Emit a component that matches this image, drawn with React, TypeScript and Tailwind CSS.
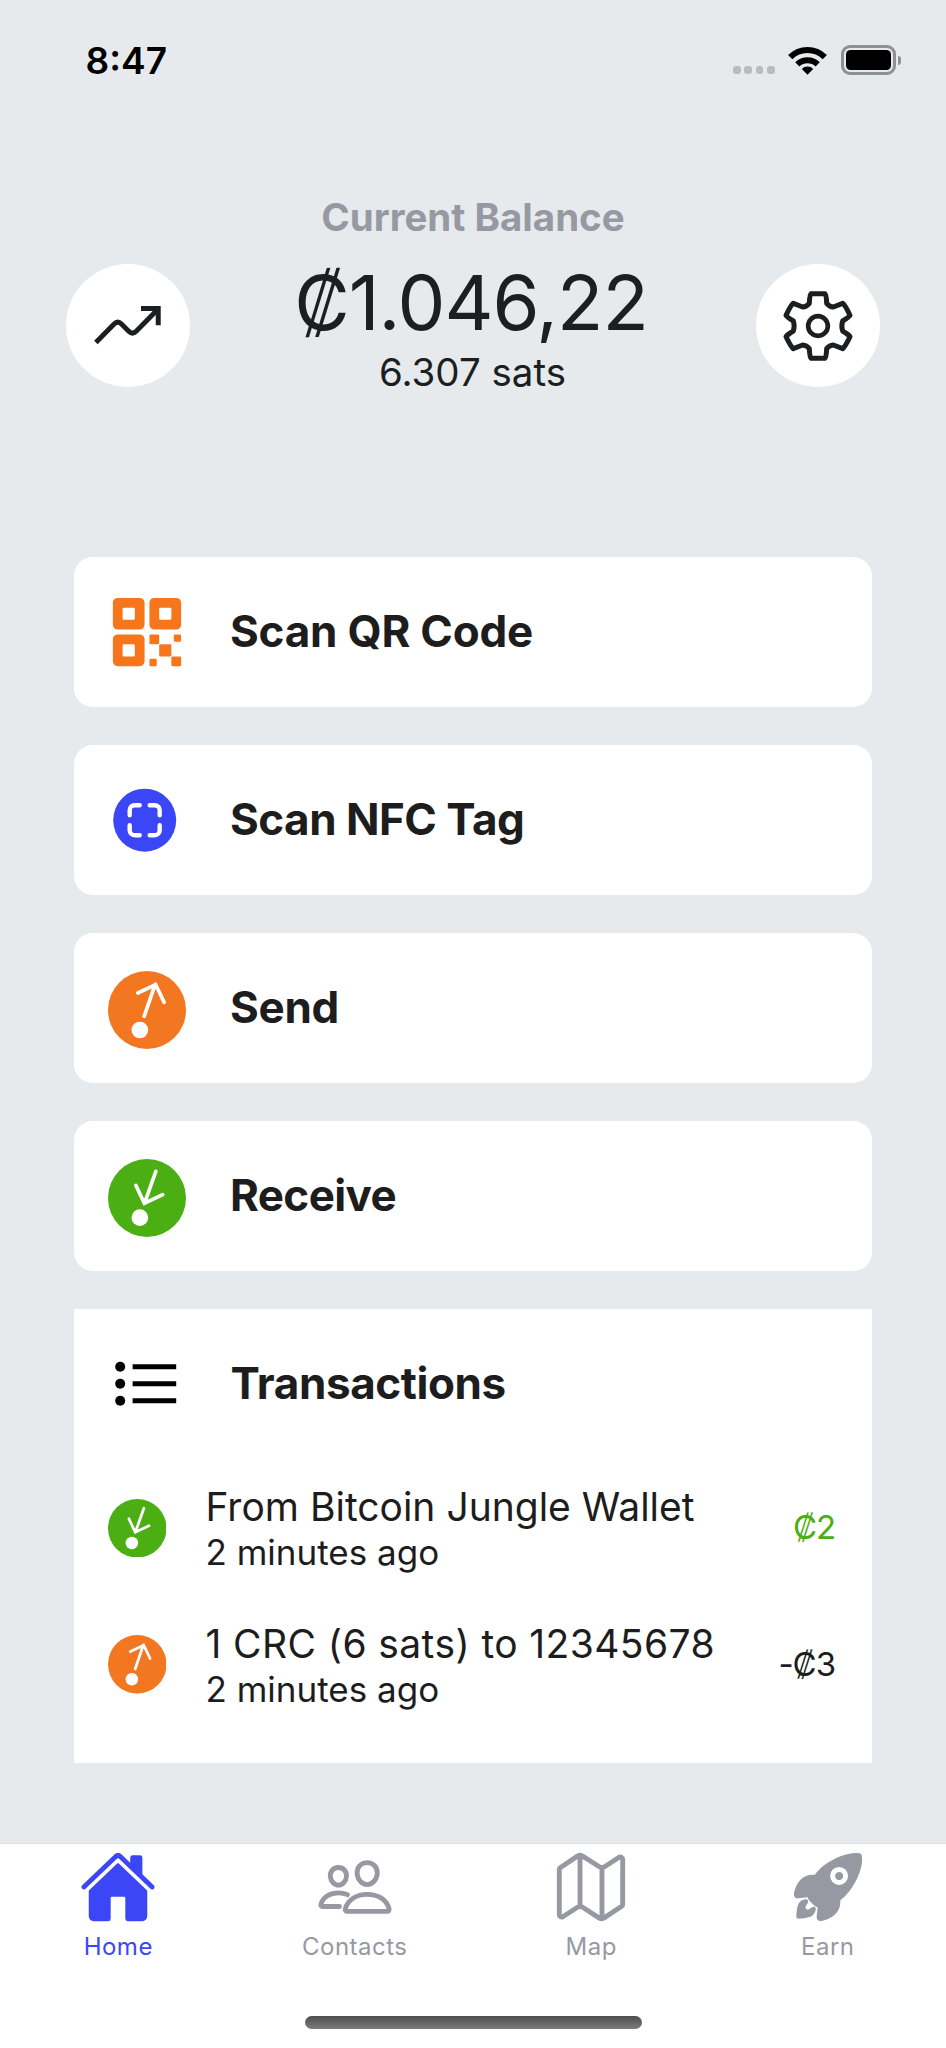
import React from 'react';
import clsx from 'clsx';
import { IoHome, IoMapOutline, IoPeopleOutline, IoQrCode, IoRocket } from 'react-icons/io5';

type IconProps = {
  className?: string;
};

const TrendIcon = ({ className }: IconProps) => (
  <svg viewBox="0 0 125 123" fill="none" stroke="currentColor" strokeWidth="5" className={className}>
    <path d="M30 78.5 48.3 60Q52 56.3 55.7 60L63 67.3Q66.7 71 70.5 67.3L92.3 45.3" />
    <path d="M75.3 44.4H92.6V61.2" />
  </svg>
);

const GearIcon = ({ className }: IconProps) => (
  <svg
    viewBox="-105 -105 210 210"
    fill="none"
    stroke="currentColor"
    strokeWidth="15"
    strokeLinejoin="round"
    className={className}
  >
    <path d="M-21 -97H21Q25 -95 26 -68Q34 -58 46 -57L74 -68Q80 -65 96 -32Q92 -26 74 -15Q69 0 74 15Q92 26 96 32Q80 65 74 68L46 57Q34 58 26 68Q25 95 21 97H-21Q-25 95 -26 68Q-34 58 -46 57L-74 68Q-80 65 -96 32Q-92 26 -74 15Q-69 0 -74 -15Q-92 -26 -96 -32Q-80 -65 -74 -68L-46 -57Q-34 -58 -26 -68Q-25 -95 -21 -97Z" />
    <circle r="29.5" strokeWidth="14" />
  </svg>
);

const NfcIcon = ({ className }: IconProps) => (
  <svg viewBox="0 0 78 78" fill="none" className={className}>
    <circle cx="36.7" cy="39.2" r="31.5" fill="#3b47f6" />
    <path
      d="M21.7 34.2v-5a5 5 0 0 1 5-5h5M41.7 24.2h5a5 5 0 0 1 5 5v5M51.7 44.2v5a5 5 0 0 1-5 5h-5M31.7 54.2h-5a5 5 0 0 1-5-5v-5"
      stroke="#fff"
      strokeWidth="4.4"
      strokeLinecap="round"
    />
  </svg>
);

const SendIcon = ({ className }: IconProps) => (
  <svg viewBox="-117 -117 234 234" fill="none" className={className}>
    <circle r="117" fill="#f37620" />
    <path d="M-8.5 19 24.5-77M-27.5-51 26-76 51.5-23" stroke="#fff" strokeWidth="11" strokeLinecap="round" />
    <circle cx="-21.5" cy="60" r="25" fill="#fff" />
  </svg>
);

const ReceiveIcon = ({ className }: IconProps) => (
  <svg viewBox="-117 -117 234 234" fill="none" className={className}>
    <circle r="117" fill="#4bae12" />
    <path d="M26.5-80-7.5 16M-33.5-38-8 16 47-10" stroke="#fff" strokeWidth="11" strokeLinecap="round" />
    <circle cx="-21.5" cy="59" r="25" fill="#fff" />
  </svg>
);

const ListIcon = ({ className }: IconProps) => (
  <svg viewBox="0 0 78 78" className={className}>
    <circle cx="12.2" cy="21.7" r="5" />
    <circle cx="12.2" cy="38.7" r="5" />
    <circle cx="12.2" cy="55.7" r="5" />
    <path d="M24.6 19.2h43.6v5H24.6zM24.6 36.2h43.6v5H24.6zM24.6 53.2h43.6v5H24.6z" />
  </svg>
);

const WifiIcon = ({ className }: IconProps) => (
  <svg viewBox="0 0 39 29" fill="none" stroke="currentColor" strokeWidth="6" className={className}>
    <path d="M2.2 11.2a24.6 24.6 0 0 1 34.6 0" />
    <path d="M9.3 18.4a14.6 14.6 0 0 1 20.4 0" />
    <path d="M19.5 28.8 13.8 23a7.8 7.8 0 0 1 11.4 0Z" fill="currentColor" stroke="none" />
  </svg>
);

const actions = [
  { label: 'Scan QR Code', icon: IoQrCode, iconClass: 'text-[#f7761c]', textClass: 'tracking-[-0.2px]' },
  { label: 'Scan NFC Tag', icon: NfcIcon, iconClass: '', textClass: 'tracking-[-0.5px]' },
  { label: 'Send', icon: SendIcon, iconClass: 'translate-y-[2px]', textClass: 'tracking-[-0.3px]' },
  { label: 'Receive', icon: ReceiveIcon, iconClass: 'translate-y-[2px]', textClass: 'tracking-[-0.6px]' },
];

const transactions = [
  { title: 'From Bitcoin Jungle Wallet', time: '2 minutes ago', amount: '₡2', incoming: true },
  { title: '1 CRC (6 sats) to 12345678', time: '2 minutes ago', amount: '-₡3', incoming: false },
];

const tabs = [
  { label: 'Home', icon: IoHome, active: true },
  { label: 'Contacts', icon: IoPeopleOutline, active: false },
  { label: 'Map', icon: IoMapOutline, active: false },
  { label: 'Earn', icon: IoRocket, active: false },
];

const StatusBar = () => (
  <div className="flex h-[120px] items-center justify-between pr-[45px] pl-[85.5px] text-black">
    <span className="mt-px text-[37px] leading-[44px] font-semibold">8:47</span>
    <div className="flex items-center">
      <div className="mt-5 mr-[13.5px] flex gap-[3.8px]">
        {[0, 1, 2, 3].map((dot) => (
          <span key={dot} className="h-[7.5px] w-[7.5px] rounded-[3px] bg-[#b9bcbf]" />
        ))}
      </div>
      <WifiIcon className="mr-[14px] h-[29px] w-[39px]" />
      <div className="h-[29.5px] w-[54.5px] rounded-[9px] border-[3px] border-[#8e9193] p-[2px]">
        <div className="h-full rounded-[4.5px] bg-black" />
      </div>
      <div className="ml-[2px] h-[9px] w-[3.5px] rounded-r-full bg-[#8e9193]" />
    </div>
  </div>
);

const Header = () => (
  <header className="flex h-[437px] items-start justify-between px-[65.5px] pt-[74px] text-[#1c1f21]">
    <button className="mt-[70px] flex h-[123px] w-[124.5px] items-center justify-center rounded-[50%] bg-white">
      <TrendIcon className="h-[123px] w-[124.5px]" />
    </button>
    <div className="flex flex-col items-center whitespace-nowrap">
      <p className="text-[38.5px] leading-[46px] font-bold text-[#9699a2]">Current Balance</p>
      <p className="mt-4 mr-[4px] text-[76px] leading-[92px] tracking-[-1px]">₡1.046,22</p>
      <p className="mt-px mr-px text-[38.5px] leading-[46px]">6.307 sats</p>
    </div>
    <button className="mt-[70px] flex h-[123px] w-[124.5px] items-center justify-center rounded-[50%] bg-white">
      <GearIcon className="mr-[1px] h-[70px] w-[70px]" />
    </button>
  </header>
);

const TabBar = () => (
  <nav className="h-[205px] border-t border-[#dfe2e4] bg-white">
    <div className="grid grid-cols-4 pt-[3.5px]">
      {tabs.map((tab) => (
        <div
          key={tab.label}
          className={clsx('flex flex-col items-center', tab.active ? 'text-[#3b47f6]' : 'text-[#9699a2]')}
        >
          <tab.icon className="h-[78px] w-[78px]" />
          <span className="mt-[6px] text-[24px] leading-[30px] tracking-[0.5px]">{tab.label}</span>
        </div>
      ))}
    </div>
    <div className="mx-auto mt-[54.5px] h-[12.5px] w-[337px] rounded-full bg-linear-to-b from-[#4d4e4e] to-[#7c7c7c]" />
  </nav>
);

const App = () => {
  return (
    <div className="flex h-[2048px] w-[946px] flex-col overflow-hidden bg-[#e6eaed] font-['Inter','Liberation_Sans',sans-serif]">
      <StatusBar />
      <Header />

      <main className="flex flex-1 flex-col gap-[38px] px-[74.4px] text-[#1d1d1d]">
        {actions.map((action) => (
          <button key={action.label} className="flex h-[150px] items-center rounded-[19px] bg-white pl-[33.6px]">
            <action.icon className={clsx('h-[78px] w-[78px]', action.iconClass)} />
            <span className={clsx('mb-[2px] ml-[44px] text-[44px] leading-[52px] font-bold', action.textClass)}>
              {action.label}
            </span>
          </button>
        ))}

        <section className="h-[454px] bg-white">
          <div className="flex h-[150.5px] items-center pl-[34px]">
            <ListIcon className="h-[78px] w-[78px] text-black" />
            <h2 className="mb-[2px] ml-[44px] text-[44px] leading-[52px] font-bold tracking-[-0.4px]">Transactions</h2>
          </div>
          {transactions.map((tx) => {
            const Icon = tx.incoming ? ReceiveIcon : SendIcon;
            return (
              <div key={tx.title} className="flex h-[136.8px] items-center pr-[36.5px] pl-[33.6px]">
                <Icon className="h-[58.5px] w-[58.5px]" />
                <div className="mt-px ml-[39px] flex-1 whitespace-nowrap">
                  <p className={clsx('text-[39px] leading-[47px]', !tx.incoming && 'tracking-[0.4px]')}>{tx.title}</p>
                  <p className="text-[35px] leading-[44px]">{tx.time}</p>
                </div>
                <span
                  className={clsx('mb-px text-[33px] leading-[40px] tracking-[-1px]', tx.incoming && 'text-[#4bae12]')}
                >
                  {tx.amount}
                </span>
              </div>
            );
          })}
        </section>
      </main>

      <TabBar />
    </div>
  );
};

export default App;
